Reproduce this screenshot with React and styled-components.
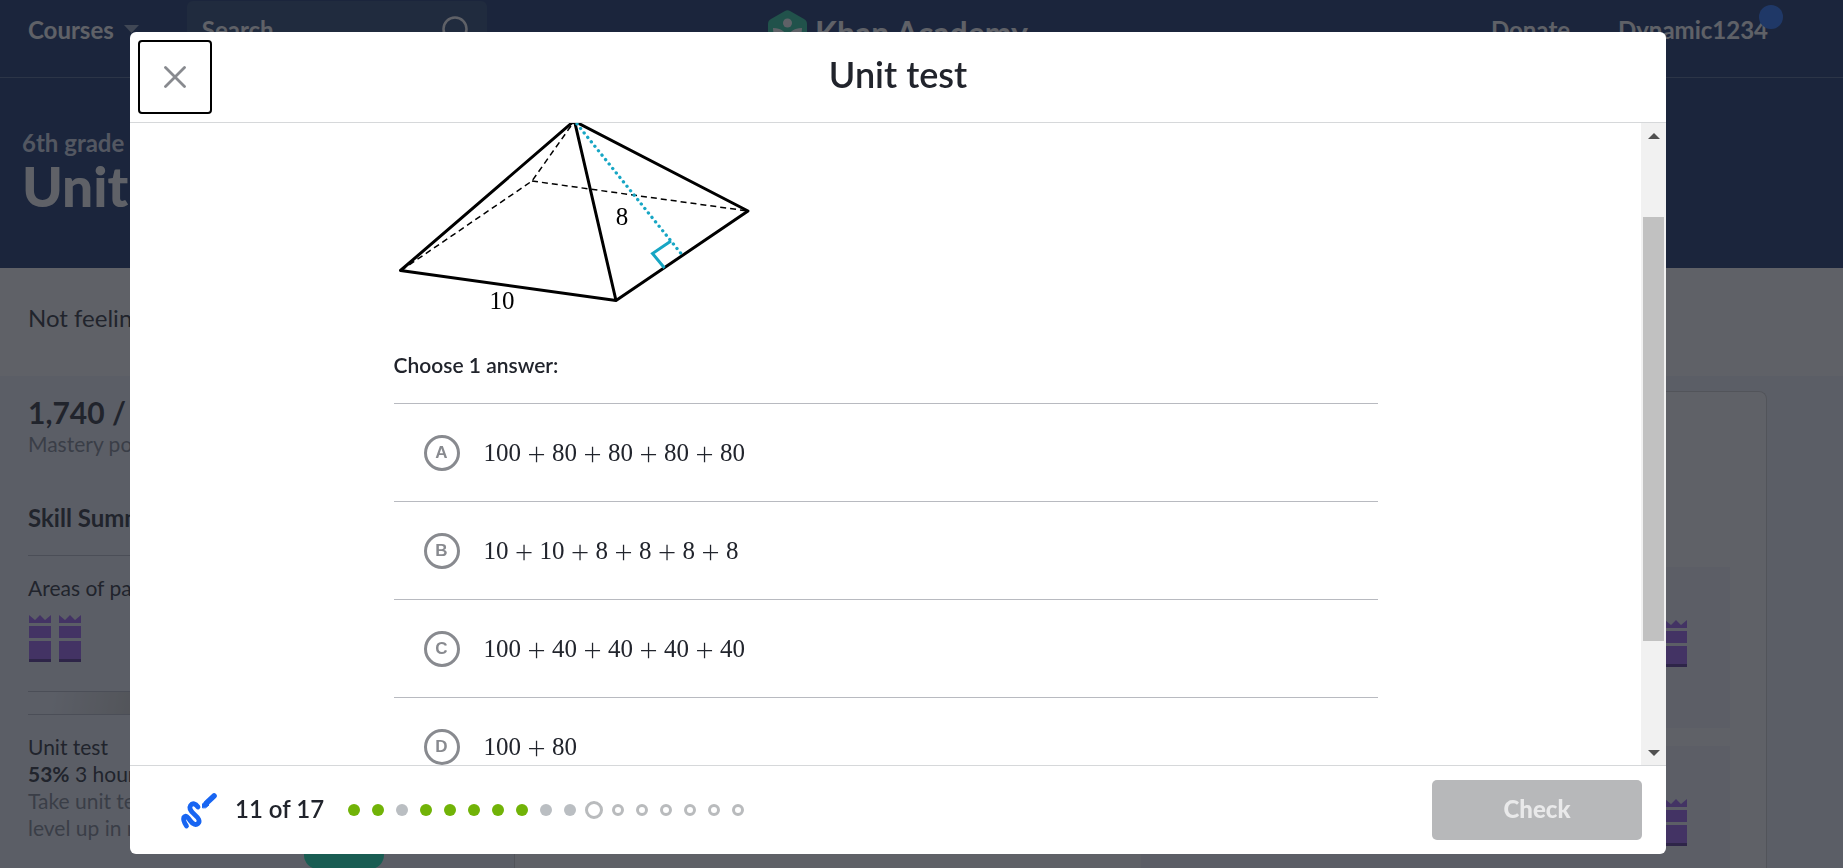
import React from "react";
import styled, { createGlobalStyle, css } from "styled-components";

const GlobalStyle = createGlobalStyle`
  *, *::before, *::after { box-sizing: border-box; }
  body {
    margin: 0;
    font-family: Lato, "Noto Sans", sans-serif;
    color: #21242c;
    background: #f0f4fc;
  }
  h1, h2, p { margin: 0; }
  button, input { font: inherit; }
`;

/* ---------- course page behind the dialog ---------- */

const Page = styled.div`
  display: flex;
  flex-direction: column;
  height: 100vh;
  overflow: hidden;
`;

const SiteHeader = styled.header`
  display: flex;
  align-items: flex-start;
  justify-content: space-between;
  flex: none;
  height: 78px;
  padding: 1px 75px 0 28px;
  background: #0b2a64;
  border-bottom: 1px solid #4a628c;
  color: #fff;
  font-size: 24px;
  font-weight: 700;
`;

const HeaderGroup = styled.div`
  display: flex;
  align-items: center;
  flex: 1;
  height: 56px;
  gap: ${(p) => p.$gap}px;
  justify-content: ${(p) => p.$align || "flex-start"};
`;

const HeaderButton = styled.button`
  display: flex;
  align-items: center;
  gap: 10px;
  padding: 0;
  border: 0;
  background: none;
  color: inherit;
  font-weight: 700;
`;

const HeaderLink = styled.a`
  position: relative;
  color: inherit;
  text-decoration: none;
`;

const Notice = styled.span`
  position: absolute;
  top: -10px;
  right: -15px;
  width: 24px;
  height: 24px;
  border-radius: 50%;
  background: #1c6cff;
`;

const SearchBox = styled.label`
  display: flex;
  align-items: center;
  width: 300px;
  height: 56px;
  padding: 0 17px 0 15px;
  border-radius: 6px;
  background: #1f3d6c;
`;

const SearchInput = styled.input`
  flex: 1;
  min-width: 0;
  padding: 0;
  border: 0;
  background: none;
  color: #fff;
  font-weight: 700;
  &::placeholder { color: #fff; opacity: 1; }
`;

const Brand = styled.a`
  display: flex;
  align-items: center;
  gap: 8px;
  height: 62px;
  color: #fff;
  font-size: 32px;
  text-decoration: none;
`;

const Banner = styled.section`
  flex: none;
  height: 190px;
  padding: 49px 22px;
  background: #0b2a64;
  color: #fff;
`;

const BannerCourse = styled.p`
  color: #d5dbe8;
  font-size: 24px;
  font-weight: 700;
  line-height: 32px;
`;

const BannerTitle = styled.h1`
  font-size: 55px;
  font-weight: 900;
  line-height: 54px;
`;

const Strip = styled.section`
  flex: none;
  height: 108px;
  padding: 35px 28px;
  background: #fff;
  font-size: 24px;
  line-height: 30px;
`;

const Columns = styled.div`
  display: flex;
  flex: 1;
  min-height: 0;
  padding-right: 76px;
`;

const Sidebar = styled.aside`
  width: 514px;
  flex: none;
  padding: 18px 28px 0;
  font-size: 21px;
  line-height: 27px;
`;

const Points = styled.p`
  font-size: 30px;
  font-weight: 700;
  line-height: 36px;
`;

const Muted = styled.p`
  color: #7c818c;
`;

const SideTitle = styled.h2`
  margin-top: 46px;
  padding-bottom: 22px;
  border-bottom: 1px solid #b8bcc4;
  font-size: 24px;
  line-height: 30px;
`;

const SkillGroup = styled.section`
  padding: 18px 0 29px;
  border-bottom: 1px solid #b8bcc4;
`;

const Badges = styled.div`
  display: flex;
  gap: 8px;
  margin-top: 14px;
  padding-left: 1px;
`;

const Fade = styled.div`
  height: 23px;
  border-bottom: 1px solid #b8bcc4;
  background: linear-gradient(100deg, transparent 5%, #cfcfcb 25%);
`;

const Summary = styled.section`
  padding-top: 18px;
`;

const StartButton = styled.button`
  display: block;
  width: 80px;
  height: 28px;
  margin: 0 0 0 276px;
  border: 0;
  border-radius: 14px;
  background: #04f0b6;
`;

const LessonCard = styled.main`
  flex: 1;
  margin-top: 15px;
  padding: 175px 36px 0 626px;
  border: 1px solid #d0d0d0;
  border-bottom: 0;
  border-radius: 0 8px 0 0;
  background: #fff;
`;

const Tile = styled.div`
  display: flex;
  justify-content: flex-end;
  height: 161px;
  margin-bottom: 18px;
  padding: 53px 43px;
  background: #f2f4fa;
`;

/* ---------- dialog ---------- */

const Overlay = styled.div`
  position: fixed;
  inset: 0;
  display: flex;
  padding: 32px 177px 14px 130px;
  background: rgba(33, 36, 44, 0.72);
`;

const Dialog = styled.div`
  display: flex;
  flex-direction: column;
  flex: 1;
  min-width: 0;
  overflow: hidden;
  border-radius: 6px;
  background: #fff;
`;

const DialogHeader = styled.header`
  display: grid;
  grid-template-columns: 74px 1fr 74px;
  align-items: center;
  flex: none;
  height: 91px;
  padding: 0 8px;
  border-bottom: 1px solid #d6d8da;
`;

const CloseButton = styled.button`
  display: grid;
  place-items: center;
  height: 74px;
  padding: 0;
  border: 2px solid #000;
  border-radius: 4px;
  background: #fff;
`;

const DialogTitle = styled.h2`
  padding-bottom: 6px;
  text-align: center;
  font-size: 36px;
  font-weight: 600;
  line-height: 44px;
`;

const DialogBody = styled.div`
  display: flex;
  flex: 1;
  min-height: 0;
`;

const Scroller = styled.div`
  flex: 1;
  overflow: hidden;
  padding: 0 32px;
`;

const Exercise = styled.form`
  max-width: 984px;
  margin: 0 auto;
`;

const Figure = styled.svg`
  display: block;
`;

const FigureLabel = styled.text`
  font-family: "Liberation Serif", serif;
  font-size: 25px;
  text-anchor: middle;
`;

const Choices = styled.fieldset`
  margin: 0;
  padding: 0;
  border: 0;
`;

const Prompt = styled.legend`
  padding: 0 0 24px;
  font-size: 21px;
  font-weight: 600;
  line-height: 28px;
`;

const Choice = styled.label`
  display: flex;
  align-items: center;
  gap: 24px;
  height: 98px;
  padding-left: 30px;
  border-top: 1px solid #b8bac0;
`;

const ChoiceMark = styled.span`
  display: grid;
  place-items: center;
  & > * { grid-area: 1 / 1; }
`;

const Radio = styled.input`
  appearance: none;
  width: 36px;
  height: 36px;
  margin: 0;
  border: 3px solid #888a8f;
  border-radius: 50%;
`;

const Letter = styled.span`
  color: #888a8f;
  font-family: "Liberation Sans", sans-serif;
  font-size: 17px;
  font-weight: 700;
  line-height: 20px;
`;

const Formula = styled.span`
  display: flex;
  align-items: center;
  font-family: "Liberation Serif", serif;
  font-size: 25px;
  line-height: 28px;
`;

const Plus = styled.span`
  width: 31px;
  font-family: Lato, sans-serif;
  font-size: 32px;
  font-weight: 300;
  text-align: center;
`;

const Scrollbar = styled.div`
  display: grid;
  grid-template-rows: 25px 69fr 424fr 99fr 25px;
  flex: none;
  width: 25px;
  padding: 0 2px;
  background: #f1f1f1;
`;

const ArrowCell = styled.span`
  display: grid;
  place-items: center;
  grid-row: ${(p) => p.$row};
`;

const Thumb = styled.span`
  grid-row: 3;
  background: #c1c1c1;
`;

const DialogFooter = styled.footer`
  display: flex;
  align-items: center;
  flex: none;
  height: 89px;
  padding: 0 24px 0 50px;
  border-top: 1px solid #d6d8da;
`;

const ToolButton = styled.button`
  display: grid;
  padding: 0;
  border: 0;
  background: none;
`;

const Count = styled.span`
  width: 107px;
  margin-left: 15px;
  padding-bottom: 2px;
  font-size: 24px;
  font-weight: 600;
  line-height: 30px;
`;

const Dots = styled.ol`
  display: flex;
  margin: 0;
  padding: 0;
  list-style: none;
`;

const DotCell = styled.li`
  display: grid;
  place-items: center;
  width: 24px;
  height: 24px;
`;

const dotLooks = {
  right: css`background: #71b307;`,
  wrong: css`background: #babec2;`,
  open: css`border: 3px solid #b9bbbd;`,
  current: css`width: 18px; height: 18px; border: 3px solid #b9bbbd;`,
};

const Dot = styled.span`
  width: 12px;
  height: 12px;
  border-radius: 50%;
  ${(p) => dotLooks[p.$state]}
`;

const CheckButton = styled.button`
  width: 210px;
  height: 60px;
  margin-left: auto;
  padding: 0 0 4px;
  border: 0;
  border-radius: 5px;
  background: #b7b8ba;
  color: #e9e9ea;
  font-size: 24px;
  font-weight: 900;
`;

const CHOICES = [
  ["A", [100, 80, 80, 80, 80]],
  ["B", [10, 10, 8, 8, 8, 8]],
  ["C", [100, 40, 40, 40, 40]],
  ["D", [100, 80]],
];

const PROGRESS = [
  "right", "right", "wrong", "right", "right", "right", "right", "right",
  "wrong", "wrong", "current", "open", "open", "open", "open", "open", "open",
];

const MasteryBadge = () => (
  <svg width="22" height="47" viewBox="0 0 22 47" aria-hidden="true">
    <path d="M0 0l6 5 5-5 5 5 6-5v8H0z" fill="#9a5cf5" />
    <path d="M0 11h22v12H0zM0 26h22v18H0z" fill="#9a5cf5" />
    <path d="M0 44h22v3H0z" fill="#512a90" />
  </svg>
);

const Pyramid = () => (
  <Figure width="370" height="228" viewBox="394 123 370 228" role="img" aria-label="Square pyramid with base side 10 and slant height 8">
    <g fill="none" stroke="#000">
      <path d="M401 270.500L532 181L574.500 121M532 181L748 211" strokeWidth="1.500" strokeDasharray="6 4" />
      <path d="M574 121L400.500 270.500L616 300.500L748 211Z M574.500 121L616 300.500" strokeWidth="3" strokeLinejoin="round" />
    </g>
    <g fill="none" stroke="#17a6c4" strokeWidth="3">
      <path d="M577 124L683 256" strokeDasharray="0.100 5.600" strokeLinecap="round" strokeWidth="3.300" />
      <path d="M671 241L652.500 253.500L664.500 268" />
    </g>
    <FigureLabel x="622" y="225">8</FigureLabel>
    <FigureLabel x="502" y="309">10</FigureLabel>
  </Figure>
);

export default function App() {
  return (
    <>
      <GlobalStyle />
      <Page>
        <SiteHeader>
          <HeaderGroup $gap={48}>
            <HeaderButton type="button">
              Courses
              <svg width="15" height="8" viewBox="0 0 15 8" aria-hidden="true">
                <path d="M0 0h15l-7.500 8z" fill="#8fa0bd" />
              </svg>
            </HeaderButton>
            <SearchBox>
              <SearchInput type="text" placeholder="Search" aria-label="Search" />
              <svg width="32" height="32" viewBox="0 0 32 32" fill="none" stroke="#fff" strokeWidth="2.500" aria-hidden="true">
                <circle cx="17" cy="16" r="11.500" />
                <path d="M25 24l6 6" />
              </svg>
            </SearchBox>
          </HeaderGroup>
          <Brand href="#">
            <svg width="39" height="44" viewBox="0 0 39 44" aria-hidden="true">
              <path d="M17 1q2.500-1.400 5 0l14 8q3 1.700 3 5v16q0 3.300-3 5l-14 8q-2.500 1.400-5 0l-14-8q-3-1.700-3-5V14q0-3.300 3-5z" fill="#20c99a" />
              <circle cx="19.500" cy="13" r="4.500" fill="#fff" />
              <path d="M5 18c8 0 13 4 14.500 9C21 22 26 18 34 18c0 10-6 17-14.500 17S5 28 5 18z" fill="#fff" />
            </svg>
            Khan Academy
          </Brand>
          <HeaderGroup $gap={48} $align="flex-end">
            <HeaderLink href="#">Donate</HeaderLink>
            <HeaderLink href="#">
              Dynamic1234
              <Notice />
            </HeaderLink>
          </HeaderGroup>
        </SiteHeader>
        <Banner>
          <BannerCourse>6th grade</BannerCourse>
          <BannerTitle>Unit</BannerTitle>
        </Banner>
        <Strip>Not feeling ready</Strip>
        <Columns>
          <Sidebar>
            <Points>1,740 /</Points>
            <Muted>Mastery points</Muted>
            <SideTitle>Skill Summary</SideTitle>
            <SkillGroup>
              <p>Areas of parallelograms</p>
              <Badges>
                <MasteryBadge />
                <MasteryBadge />
              </Badges>
            </SkillGroup>
            <Fade />
            <Summary>
              <p>Unit test</p>
              <p><b>53%</b> 3 hours ago</p>
              <Muted>Take unit test to<br />level up in more</Muted>
            </Summary>
            <StartButton type="button" aria-label="Start" />
          </Sidebar>
          <LessonCard>
            <Tile><MasteryBadge /></Tile>
            <Tile><MasteryBadge /></Tile>
          </LessonCard>
        </Columns>
      </Page>

      <Overlay>
        <Dialog role="dialog" aria-modal="true" aria-labelledby="dialog-title">
          <DialogHeader>
            <CloseButton type="button" aria-label="Close">
              <svg width="22" height="22" viewBox="0 0 22 22" stroke="#888a8f" strokeWidth="2.800" strokeLinecap="round" aria-hidden="true">
                <path d="M1.500 1.500l19 19M20.500 1.500l-19 19" />
              </svg>
            </CloseButton>
            <DialogTitle id="dialog-title">Unit test</DialogTitle>
          </DialogHeader>
          <DialogBody>
            <Scroller>
              <Exercise>
                <Pyramid />
                <Choices>
                  <Prompt>Choose 1 answer:</Prompt>
                  {CHOICES.map(([letter, terms]) => (
                    <Choice key={letter}>
                      <ChoiceMark>
                        <Radio type="radio" name="answer" value={letter} />
                        <Letter>{letter}</Letter>
                      </ChoiceMark>
                      <Formula>
                        {terms.map((term, i) => (
                          <React.Fragment key={i}>
                            {i > 0 && <Plus>+</Plus>}
                            <span>{term}</span>
                          </React.Fragment>
                        ))}
                      </Formula>
                    </Choice>
                  ))}
                </Choices>
              </Exercise>
            </Scroller>
            <Scrollbar aria-hidden="true">
              <ArrowCell $row={1}>
                <svg width="12" height="6" viewBox="0 0 12 6"><path d="M0 6l6-6 6 6z" fill="#505050" /></svg>
              </ArrowCell>
              <Thumb />
              <ArrowCell $row={5}>
                <svg width="12" height="6" viewBox="0 0 12 6"><path d="M0 0l6 6 6-6z" fill="#505050" /></svg>
              </ArrowCell>
            </Scrollbar>
          </DialogBody>
          <DialogFooter>
            <ToolButton type="button" aria-label="Scratchpad">
              <svg width="40" height="40" viewBox="0 0 40 40" fill="none" stroke="#1865f2" strokeLinecap="round" strokeLinejoin="round" aria-hidden="true">
                <path d="M6.500 36C4.500 33 2.800 30.500 3.800 27.500C5.500 24.500 8 27.500 10.500 31C13 34.500 16 35.500 18 33.500C20.500 31 18.500 28 14.500 24.500C10.500 21 8.500 18.500 10.500 15.500C12.500 12.500 15.500 13.500 18 17" strokeWidth="4.800" />
                <path d="M27 12.500L34 6" strokeWidth="5.600" />
                <path d="M22.500 17.500v-3.500l3-3 3.500 4-3 2.500z" fill="#1865f2" strokeWidth="1" />
              </svg>
            </ToolButton>
            <Count>11 of 17</Count>
            <Dots aria-label="Progress">
              {PROGRESS.map((state, i) => (
                <DotCell key={i}><Dot $state={state} /></DotCell>
              ))}
            </Dots>
            <CheckButton type="button" disabled>Check</CheckButton>
          </DialogFooter>
        </Dialog>
      </Overlay>
    </>
  );
}
